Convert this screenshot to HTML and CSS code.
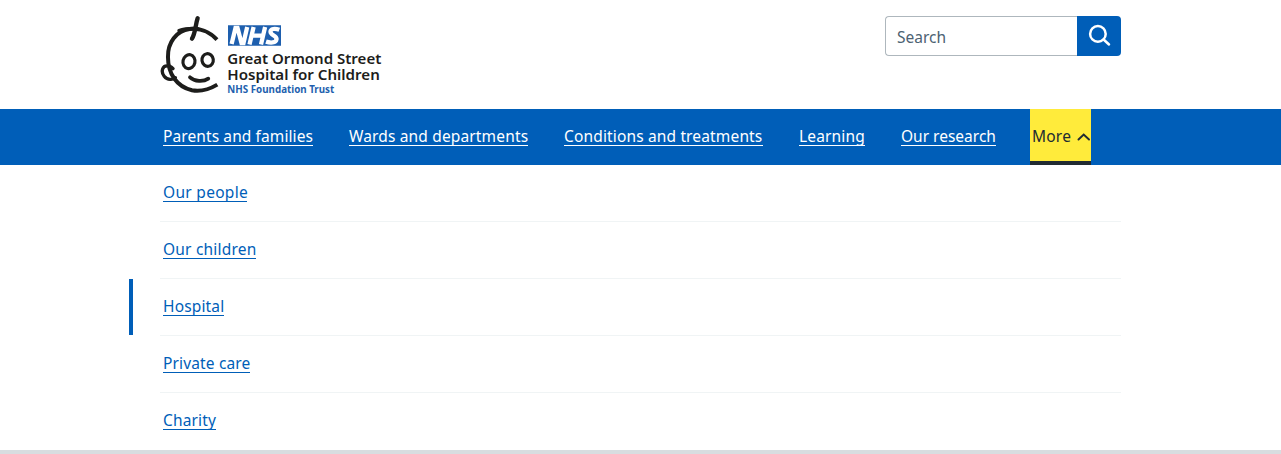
FILE: index.html
```html
<!DOCTYPE html>
<html lang="en">
<head>
<meta charset="utf-8">
<title>Great Ormond Street Hospital for Children</title>
<link rel="stylesheet" href="styles.css">
</head>
<body>
<header class="header container">
  <a class="logo" href="#" aria-label="Home">
    <svg width="224" height="80" viewBox="160 15 224 80">
      <g transform="translate(155.300 8.300) scale(.33333)" fill="none" stroke="#1d1d1b" stroke-linecap="round">
        <path stroke-width="12" d="M185 94C163 70 132 58 103 62C63 67 37 103 38 146C38 196 64 235 110 246C137 251 164 242 186 229" stroke-linecap="butt"/>
        <path stroke-width="10" d="M71 67C88 61 107 60 127 61"/>
        <path stroke-width="13" d="M127 30C120 50 121 73 110 91"/>
        <path stroke-width="10" d="M53 181C43 170 26 170 22 182C17 197 31 215 47 213C53 213 58 211 60 208"/>
        <ellipse cx="101" cy="160" rx="18" ry="21" stroke-width="9.500" transform="rotate(12 101 160)"/>
        <ellipse cx="157" cy="155" rx="17" ry="19" stroke-width="9.500" transform="rotate(-8 157 155)"/>
        <path stroke-width="11" d="M104 207C118 220 144 221 159 211"/>
      </g>
      <path fill="#1e5fae" d="M228 25.300h53v20.500h-53z"/>
      <path fill="none" stroke="#fff" stroke-width="4.300" d="M231.600 44L235.500 28H237.500L241.500 43H243.500L247.200 27M249.500 44.500L253.600 27M261 44.500L265.100 27M252 35.600H263M279.300 29.800C275 28.200 270.500 28.600 270.500 31.800C270.500 35.500 277 35.200 276.500 39.200C276 43.300 270 43 266 41.600"/>
      <g class="logo-text">
        <text x="227.300" y="64" font-size="14.500" textLength="154" lengthAdjust="spacingAndGlyphs">Great Ormond Street</text>
        <text x="227.300" y="80" font-size="14.500" textLength="152.500" lengthAdjust="spacingAndGlyphs">Hospital for Children</text>
        <text class="trust" x="227.300" y="93" font-size="9.700" textLength="107" lengthAdjust="spacingAndGlyphs">NHS Foundation Trust</text>
      </g>
    </svg>
  </a>
  <form class="search">
    <input class="search-input" type="search" placeholder="Search" aria-label="Search">
    <button class="search-button" type="button" aria-label="Submit search">
      <svg width="24" height="24" viewBox="0 0 24 24" fill="none" stroke="#fff" stroke-width="2.500" stroke-linecap="round"><circle cx="10.900" cy="9.900" r="7.800"/><path d="M16.600 15.500L22 20.500"/></svg>
    </button>
  </form>
</header>
<nav class="nav">
  <div class="nav-list container">
    <a class="link l1" href="#">Parents and families</a>
    <a class="link l2" href="#">Wards and departments</a>
    <a class="link l3" href="#">Conditions and treatments</a>
    <a class="link l4" href="#">Learning</a>
    <a class="link l5" href="#">Our research</a>
    <button class="more" type="button"><span>More</span>
      <svg width="13" height="8" viewBox="0 0 13 8" fill="none" stroke="#212b32" stroke-width="1.900" stroke-linecap="round"><path d="M1.500 6.500L6.700 1.500L12 6.500"/></svg>
    </button>
  </div>
</nav>
<ul class="menu container">
  <li class="menu-item"><a class="link m1" href="#">Our people</a></li>
  <li class="menu-item"><a class="link m2" href="#">Our children</a></li>
  <li class="menu-item current"><a class="link m3" href="#">Hospital</a></li>
  <li class="menu-item"><a class="link m4" href="#">Private care</a></li>
  <li class="menu-item"><a class="link m5" href="#">Charity</a></li>
</ul>
<div class="rule"></div>
</body>
</html>
```
FILE: styles.css
```css
* { box-sizing: border-box; }
body {
  margin: 0;
  height: 454px;
  overflow: hidden;
  background: #fff;
  color: #212b32;
  font: 15.5px/20px "Noto Sans", "Open Sans", sans-serif;
}
.container { width: 961px; margin: 0 auto; }
.header { display: flex; justify-content: space-between; height: 109px; padding-top: 15px; }
.logo svg { display: block; }
.logo-text { font-family: "Noto Sans", sans-serif; font-weight: 600; fill: #1d1d1b; }
.trust { fill: #1e5fae; font-weight: 700; }
.search { display: flex; width: 236px; height: 40px; margin-top: 1px; }
.search-input {
  width: 192px;
  padding: 1px 11px 0;
  border: 1px solid #aeb7bd;
  border-right: 0;
  border-radius: 4px 0 0 4px;
  font: inherit;
}
.search-input::placeholder { color: #4c6272; opacity: 1; }
.search-button {
  display: flex;
  justify-content: center;
  width: 44px;
  padding: 8px 0 0;
  border: 0;
  border-radius: 0 4px 4px 0;
  background: #005eb8;
}
.nav { height: 56px; background: #005eb8; }
.nav-list { display: flex; align-items: flex-start; gap: 36px; padding-left: 3px; }
.link {
  display: block;
  height: 20px;
  border-bottom: 1px solid;
  color: #005eb8;
  line-height: 21px;
  letter-spacing: .15px;
  text-decoration: none;
  white-space: nowrap;
}
.nav .link { margin-top: 17px; color: #fff; }
.l1 { width: 150px; letter-spacing: .1px; }
.l2 { width: 179px; }
.l3 { width: 199px; }
.l4 { width: 66px; }
.nav .l5 { width: 95px; letter-spacing: 0; }
.more {
  display: flex;
  align-items: flex-start;
  gap: 6px;
  width: 61px;
  height: 56px;
  margin-left: -2px;
  padding: 17px 0 0 2px;
  border: 0;
  border-bottom: 4px solid #212b32;
  background: #ffeb3b;
  color: #212b32;
  font: inherit;
  line-height: 21px;
  letter-spacing: .2px;
}
.more svg { flex: none; margin-top: 7px; }
.menu { height: 285px; padding: 0; list-style: none; }
.menu-item { display: flex; height: 57px; padding: 17px 0 0 3px; border-bottom: 1px solid #f0f4f5; }
.menu-item:last-child { border-bottom: 0; }
.current { position: relative; }
.current::before { content: ""; position: absolute; left: -31px; top: 0; width: 4px; height: 56px; background: #005eb8; }
.m1 { width: 84px; letter-spacing: .3px; }
.m2 { width: 93px; letter-spacing: .2px; }
.m3 { width: 61px; }
.m4 { width: 87px; }
.m5 { width: 53px; }
.rule { height: 4px; background: #d8dde0; }
```
